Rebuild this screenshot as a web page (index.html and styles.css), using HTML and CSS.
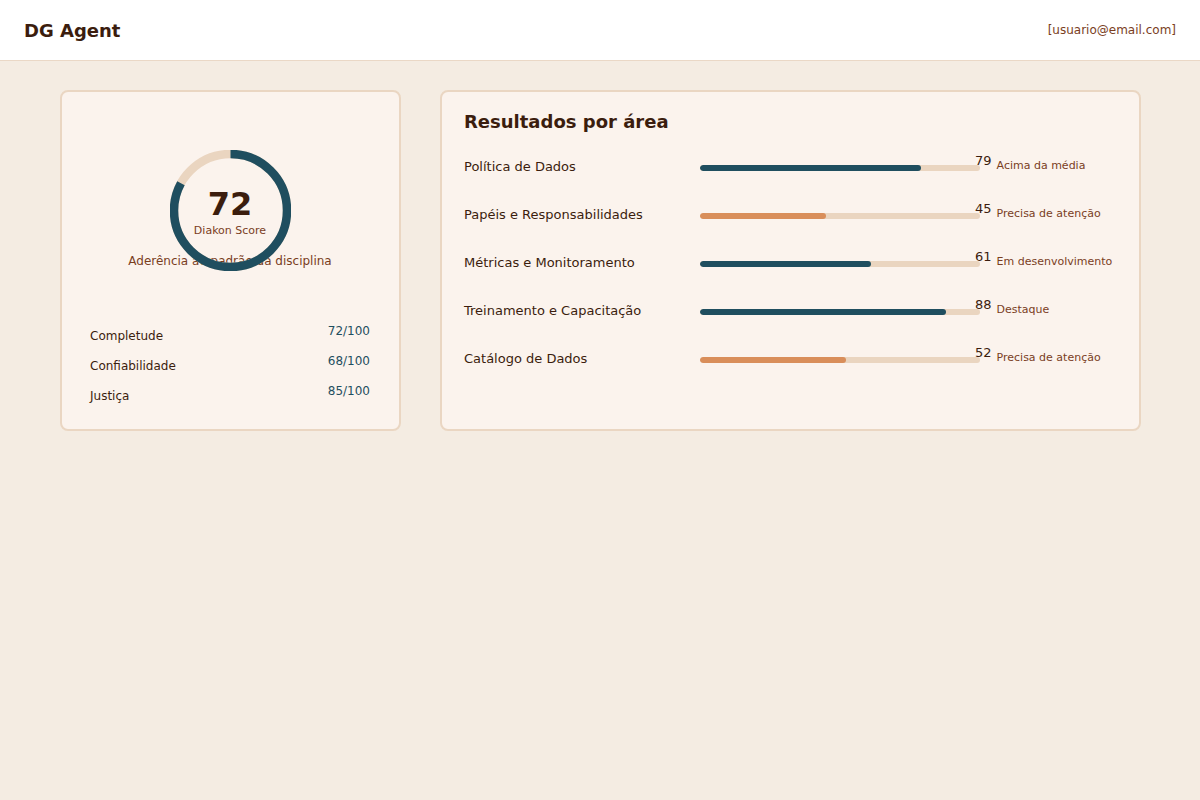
FILE: index.html
```html
<!DOCTYPE html>
<html lang="pt-BR">
<head>
<meta charset="utf-8">
<title>DG Agent</title>
<link rel="stylesheet" href="styles.css">
</head>
<body>
<header class="topbar">
  <div class="brand">DG Agent</div>
  <div class="user">[usuario@email.com]</div>
</header>
<main class="content">
  <section class="card score-card">
    <div class="donut">
      <svg class="donut-svg" width="121" height="121" viewBox="0 0 121 121">
        <circle cx="60.5" cy="60.5" r="56.5" fill="none" stroke="#ead5c0" stroke-width="8.5"/>
        <circle cx="60.5" cy="60.5" r="56.5" fill="none" stroke="#1f4e5f" stroke-width="8.5" pathLength="100" stroke-dasharray="83 100" transform="rotate(-90 60.5 60.5)"/>
      </svg>
      <div class="donut-label">
        <div class="donut-value">72</div>
        <div class="donut-name">Diakon Score</div>
      </div>
    </div>
    <p class="caption">Aderência ao padrão da disciplina</p>
    <ul class="metrics">
      <li class="metric"><span class="metric-name">Completude</span><span class="metric-value">72/100</span></li>
      <li class="metric"><span class="metric-name">Confiabilidade</span><span class="metric-value">68/100</span></li>
      <li class="metric"><span class="metric-name">Justiça</span><span class="metric-value">85/100</span></li>
    </ul>
  </section>
  <section class="card areas-card">
    <h2 class="areas-title">Resultados por área</h2>
    <ul class="areas">
      <li class="area">
        <span class="area-name">Política de Dados</span>
        <span class="track"><span class="fill fill-good" style="width:79%"></span></span>
        <span class="area-num">79</span>
        <span class="area-status">Acima da média</span>
      </li>
      <li class="area">
        <span class="area-name">Papéis e Responsabilidades</span>
        <span class="track"><span class="fill fill-warn" style="width:45%"></span></span>
        <span class="area-num">45</span>
        <span class="area-status">Precisa de atenção</span>
      </li>
      <li class="area">
        <span class="area-name">Métricas e Monitoramento</span>
        <span class="track"><span class="fill fill-good" style="width:61%"></span></span>
        <span class="area-num">61</span>
        <span class="area-status">Em desenvolvimento</span>
      </li>
      <li class="area">
        <span class="area-name">Treinamento e Capacitação</span>
        <span class="track"><span class="fill fill-good" style="width:88%"></span></span>
        <span class="area-num">88</span>
        <span class="area-status">Destaque</span>
      </li>
      <li class="area">
        <span class="area-name">Catálogo de Dados</span>
        <span class="track"><span class="fill fill-warn" style="width:52%"></span></span>
        <span class="area-num">52</span>
        <span class="area-status">Precisa de atenção</span>
      </li>
    </ul>
  </section>
</main>
</body>
</html>
```

FILE: styles.css
```css
* { box-sizing: border-box; }

html, body {
  margin: 0;
  padding: 0;
}

body {
  background: #f4ece2;
  font-family: "DejaVu Sans", sans-serif;
  color: #3b1d0e;
  min-height: 800px;
}

.topbar {
  height: 61px;
  background: #ffffff;
  border-bottom: 1px solid #ead8c6;
  display: flex;
  align-items: center;
  justify-content: space-between;
  padding: 0 24px;
}

.brand {
  font-size: 18px;
  font-weight: bold;
  color: #3b1d0e;
}

.user {
  font-size: 12px;
  color: #7a3e1e;
}

.content {
  width: 1081px;
  margin: 29px 0 0 60px;
  display: grid;
  grid-template-columns: 341px 701px;
  gap: 39px;
  align-items: stretch;
}

.card {
  background: #fbf3ed;
  border: 2px solid #ead6c2;
  border-radius: 8px;
}

.score-card {
  height: 341px;
  padding: 58px 29px 0 28px;
  display: flex;
  flex-direction: column;
  align-items: center;
}

.donut {
  position: relative;
  width: 121px;
  height: 121px;
}

.donut-svg {
  display: block;
}

.donut-label {
  position: absolute;
  inset: 0;
  display: flex;
  flex-direction: column;
  align-items: center;
  justify-content: center;
  padding-top: 2px;
}

.donut-value {
  font-size: 32px;
  font-weight: bold;
  line-height: 36px;
  color: #3b1d0e;
  margin-bottom: 2px;
}

.donut-name {
  font-size: 11px;
  line-height: 14px;
  color: #7a3e1e;
}

.caption {
  margin: -17px 0 0;
  font-size: 12px;
  line-height: 15px;
  color: #7a3e1e;
}

.metrics {
  list-style: none;
  margin: 55px 0 0;
  padding: 0;
  width: 100%;
}

.metric {
  display: flex;
  justify-content: space-between;
  align-items: flex-start;
  height: 30px;
  font-size: 12px;
  line-height: 15px;
}

.metric-name {
  padding-top: 5px;
  color: #3b1d0e;
}

.metric-value {
  color: #1f4e5f;
}

.areas-card {
  padding: 19px 22px 0;
}

.areas-title {
  margin: 0;
  font-size: 18px;
  line-height: 22px;
  font-weight: bold;
  color: #3b1d0e;
}

.areas {
  list-style: none;
  margin: 10px 0 0;
  padding: 0;
}

.area {
  display: grid;
  grid-template-columns: 236px 280px max-content 1fr;
  align-items: center;
  height: 48px;
}

.area-name {
  font-size: 13px;
  line-height: 16px;
  color: #3b1d0e;
  margin-top: -1px;
}

.track {
  display: block;
  height: 6px;
  border-radius: 3px;
  background: #ead5c0;
  margin-top: 1px;
  overflow: hidden;
}

.fill {
  display: block;
  height: 100%;
  border-radius: 3px;
}

.fill-good { background: #1f4e5f; }
.fill-warn { background: #d98e5a; }

.area-num {
  margin-left: -5px;
  font-size: 13px;
  line-height: 16px;
  color: #3b1d0e;
  margin-top: -12px;
}

.area-status {
  margin-left: 5px;
  font-size: 11px;
  line-height: 14px;
  color: #7a3e1e;
  margin-top: -3px;
}
```
